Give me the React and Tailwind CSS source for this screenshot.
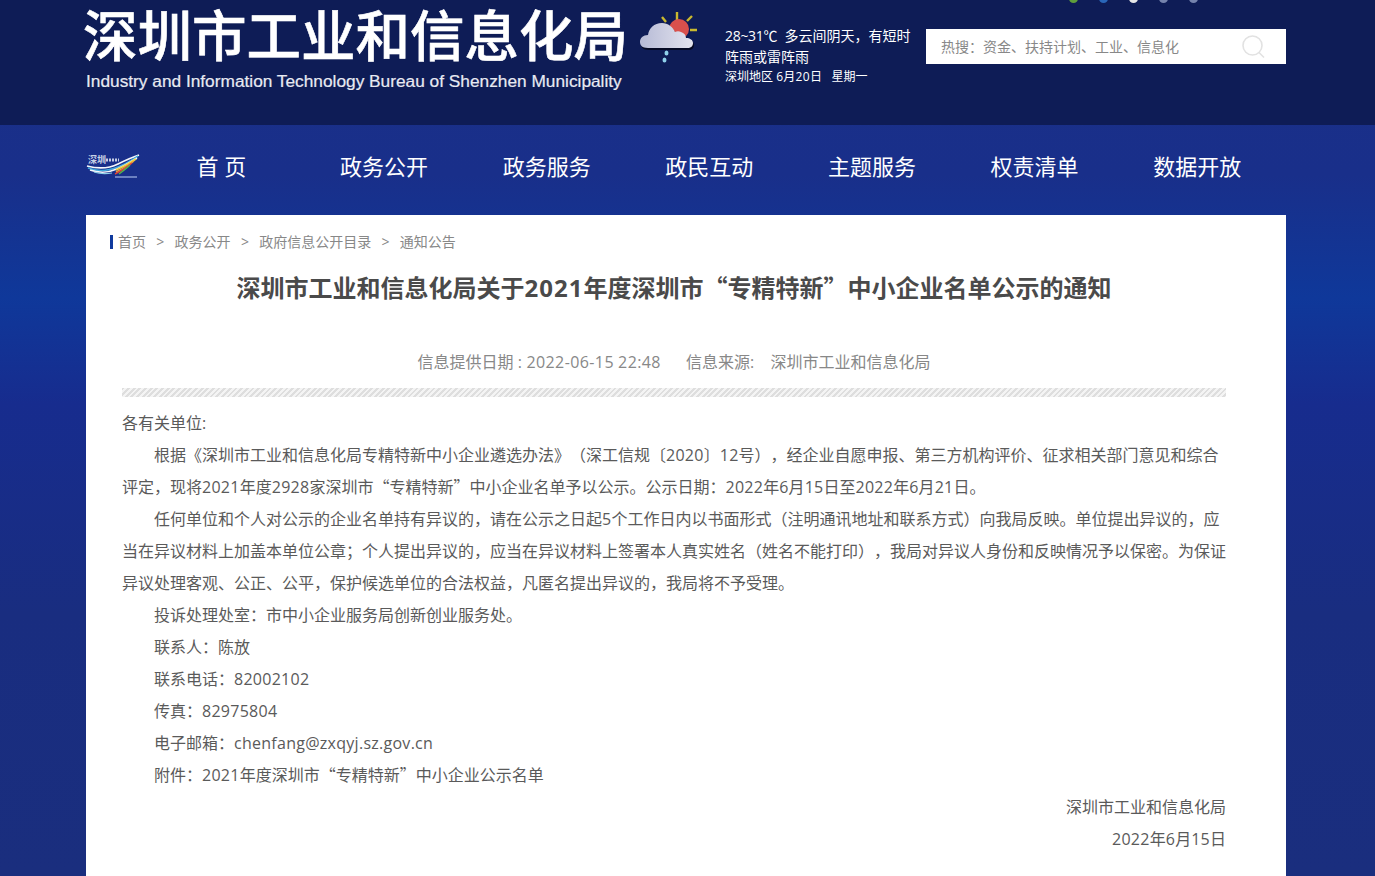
import React from 'react';

const navItems = ['首 页', '政务公开', '政务服务', '政民互动', '主题服务', '权责清单', '数据开放'];
const crumbs = ['首页', '政务公开', '政府信息公开目录', '通知公告'];
const dots = ['bg-[#5f9e3c]', 'bg-[#2a66b8]', 'bg-[#e6e6e6]', 'bg-[#7583ad]', 'bg-[#7583ad]'];

// latin runs sit a bit wider than the installed font, quotes need the CJK face to be full width
function Txt({ text, latin = 'tracking-[0.27px]' }) {
  return text.split(/([A-Za-z0-9@.~:-]+|[“”])/).map((part, i) => {
    if (part === '“' || part === '”') {
      return <span key={i} className="font-['Noto_Sans_CJK_SC',sans-serif] leading-none">{part}</span>;
    }
    if (i % 2 === 1) {
      return <span key={i} className={`leading-none ${latin}`}>{part}</span>;
    }
    return part;
  });
}

function WeatherIcon() {
  return (
    <svg width="60" height="56" viewBox="0 0 60 56" className="shrink-0">
      <defs>
        <linearGradient id="cloud" x1="0" y1="0" x2="1" y2="0">
          <stop offset="0" stopColor="#b6bad6" />
          <stop offset="1" stopColor="#e4e4ee" />
        </linearGradient>
      </defs>
      <g stroke="#c9b92f" strokeWidth="2.4">
        <path d="M37 1v8M22 6l4 5M52 5l-5 5M50 19h7" />
      </g>
      <circle cx="39" cy="18" r="10" fill="#d9504c" />
      <path d="M8 37c-6 0-8-3-8-6 0-4 3-7 8-7 1-7 6-12 14-12 6 0 11 4 13 9 2-1 4-1 6 0 3 1 5 3 5 6 4 0 7 2 7 5s-2 5-6 5z" fill="#060a24" transform="translate(1 2)" />
      <path d="M8 37c-6 0-8-3-8-6 0-4 3-7 8-7 1-7 6-12 14-12 6 0 11 4 13 9 2-1 4-1 6 0 3 1 5 3 5 6 4 0 7 2 7 5s-2 5-6 5z" fill="url(#cloud)" />
      <ellipse cx="26.500" cy="42" rx="2" ry="2.600" fill="#8fd0ea" />
      <ellipse cx="24.500" cy="49" rx="2" ry="2.600" fill="#8fd0ea" />
    </svg>
  );
}

function NavLogo() {
  return (
    <svg width="54" height="25" viewBox="0 0 54 25" className="shrink-0" fill="none">
      <text x="2" y="9" fontSize="9" fontWeight="700" fill="#c9d2e6" fontFamily="'Noto Sans CJK SC',sans-serif">深圳</text>
      <path d="M20 6h13" stroke="#c3cde4" strokeWidth="3" strokeDasharray="2 1" />
      <path d="M1 12c11 3 21 3 31-2S47 3 53 1" stroke="#f4f7fb" strokeWidth="1.800" />
      <path d="M2 14c10 4 20 3 30-1S47 5 52 2" stroke="#3fa9dc" strokeWidth="1.500" />
      <path d="M4 16c9 3 18 3 27-1S46 7 51 4" stroke="#f4f7fb" strokeWidth="1.500" />
      <path d="M30 16c7-3 14-7 20-11" stroke="#f1d23c" strokeWidth="1.600" />
      <path d="M30 18c6-3 13-7 18-11" stroke="#e9a23b" strokeWidth="1.500" />
      <path d="M29 20c6-3 12-7 17-11" stroke="#e0463a" strokeWidth="1.500" />
      <path d="M33 20c4-3 8-6 11-9" stroke="#54b848" strokeWidth="1.400" />
      <path d="M8 18c6 2 12 2 18 1" stroke="#8fd0ea" strokeWidth="1.200" />
      <rect x="29" y="22" width="22" height="2" fill="#8fa3d8" opacity=".7" />
    </svg>
  );
}

function SearchIcon() {
  return (
    <svg width="24" height="24" viewBox="0 0 24 24" fill="none" stroke="#e2e2e2" strokeWidth="1.600">
      <circle cx="10.500" cy="10.500" r="9.500" />
      <path d="M17 17.500l5 5" />
    </svg>
  );
}

export default function App() {
  return (
    <div className="relative h-[876px] overflow-hidden bg-[linear-gradient(180deg,#1a3088_0%,#192f8a_20%,#0f389a_34%,#172c8e_46%,#192d80_70%,#1a2e7e_100%)] font-['Open_Sans','Noto_Sans_CJK_SC',sans-serif] text-[#5a5a5a] [text-spacing-trim:space-all]">
      <header className="relative h-[125px] bg-[#0e1c56]">
        <div className="absolute left-[1069px] top-[-6px] flex gap-[21px]">
          {dots.map((c, i) => (
            <span key={i} className={`h-[9px] w-[9px] rounded-full ${c}`} />
          ))}
        </div>
        <div className="ml-[86px] flex w-[1200px] items-start">
          <div className="w-[540px] shrink-0 pt-[4px] text-white">
            <div className="ml-[-3px] whitespace-nowrap text-[54.500px] leading-[62px] font-medium [-webkit-text-stroke:0.6px_white]">深圳市工业和信息化局</div>
            <div className="mt-[1px] whitespace-nowrap font-['Liberation_Sans',sans-serif] text-[17.300px] leading-[28px] text-[#e8eaf2] [-webkit-text-stroke:0.2px_#e8eaf2]">
              Industry and Information Technology Bureau of Shenzhen Municipality
            </div>
          </div>
          <div className="ml-[14px] pt-[11px]">
            <WeatherIcon />
          </div>
          <div className="ml-[25px] w-[195px] shrink-0 pt-[25px] text-[14px] text-white">
            <p className="whitespace-nowrap leading-[21px]"><span className="tracking-[-0.3px]">28~31℃</span>&nbsp;&nbsp;多云间阴天，有短时</p>
            <p className="whitespace-nowrap leading-[21px]">阵雨或雷阵雨</p>
            <p className="whitespace-nowrap text-[12px] leading-[19px]">深圳地区 <span className="tracking-[0.3px]">6月20日</span>&nbsp;&nbsp;&nbsp;星期一</p>
          </div>
          <div className="mt-[29px] ml-[6px] flex h-[35px] flex-1 items-center justify-between bg-white pr-[20px] pl-[15px]">
            <span className="text-[14px] text-[#888]">热搜：资金、扶持计划、工业、信息化</span>
            <SearchIcon />
          </div>
        </div>
      </header>

      <nav className="ml-[86px] flex h-[90px] w-[1200px] items-center pb-[7px]">
        <div className="w-[54px] shrink-0">
          <NavLogo />
        </div>
        {navItems.map((item) => (
          <a key={item} className="w-[162.670px] shrink-0 text-center text-[22px] whitespace-pre text-white">
            {item}
          </a>
        ))}
      </nav>

      <main className="ml-[86px] h-[700px] w-[1200px] bg-white pt-[19px] pr-[60px] pl-[36px]">
        <div className="ml-[-12px] flex items-center text-[14px] leading-[16px] text-[#888]">
          <span className="mr-[5px] h-[14px] w-[3px] bg-[#0f3a9e]" />
          {crumbs.map((c, i) => (
            <React.Fragment key={c}>
              {i > 0 && <span className="mx-[10.300px]">&gt;</span>}
              <span>{c}</span>
            </React.Fragment>
          ))}
        </div>
        <h1 className="mt-[20px] text-center text-[24px] leading-[36px] font-bold text-[#4a4a4a]">
          <Txt text="深圳市工业和信息化局关于2021年度深圳市“专精特新”中小企业名单公示的通知" latin="tracking-[1px]" />
        </h1>
        <div className="mt-[44px] flex justify-center gap-[25px] text-[16px] leading-[24px] text-[#888]">
          <span><Txt text="信息提供日期 : 2022-06-15 22:48" latin="tracking-[0.4px]" /></span>
          <span><span className="mr-[8px]">信息来源:</span>&nbsp;&nbsp;深圳市工业和信息化局</span>
        </div>
        <div className="mt-[14px] h-[9px] bg-[repeating-linear-gradient(135deg,#dedede_0,#dedede_2px,#f4f4f4_2px,#f4f4f4_4px)]" />
        <article className="mt-[10px] text-[16px] leading-[32px]">
          <p>各有关单位:</p>
          <p className="indent-8"><Txt text="根据《深圳市工业和信息化局专精特新中小企业遴选办法》（深工信规〔2020〕12号），经企业自愿申报、第三方机构评价、征求相关部门意见和综合评定，现将2021年度2928家深圳市“专精特新”中小企业名单予以公示。公示日期：2022年6月15日至2022年6月21日。" /></p>
          <p className="indent-8"><Txt text="任何单位和个人对公示的企业名单持有异议的，请在公示之日起5个工作日内以书面形式（注明通讯地址和联系方式）向我局反映。单位提出异议的，应当在异议材料上加盖本单位公章；个人提出异议的，应当在异议材料上签署本人真实姓名（姓名不能打印），我局对异议人身份和反映情况予以保密。为保证异议处理客观、公正、公平，保护候选单位的合法权益，凡匿名提出异议的，我局将不予受理。" /></p>
          <p className="indent-8">投诉处理处室：市中小企业服务局创新创业服务处。</p>
          <p className="indent-8">联系人：陈放</p>
          <p className="indent-8"><Txt text="联系电话：82002102" /></p>
          <p className="indent-8"><Txt text="传真：82975804" /></p>
          <p className="indent-8"><Txt text="电子邮箱：chenfang@zxqyj.sz.gov.cn" /></p>
          <p className="indent-8"><Txt text="附件：2021年度深圳市“专精特新”中小企业公示名单" /></p>
          <p className="text-right">深圳市工业和信息化局</p>
          <p className="text-right"><Txt text="2022年6月15日" /></p>
        </article>
      </main>
    </div>
  );
}
